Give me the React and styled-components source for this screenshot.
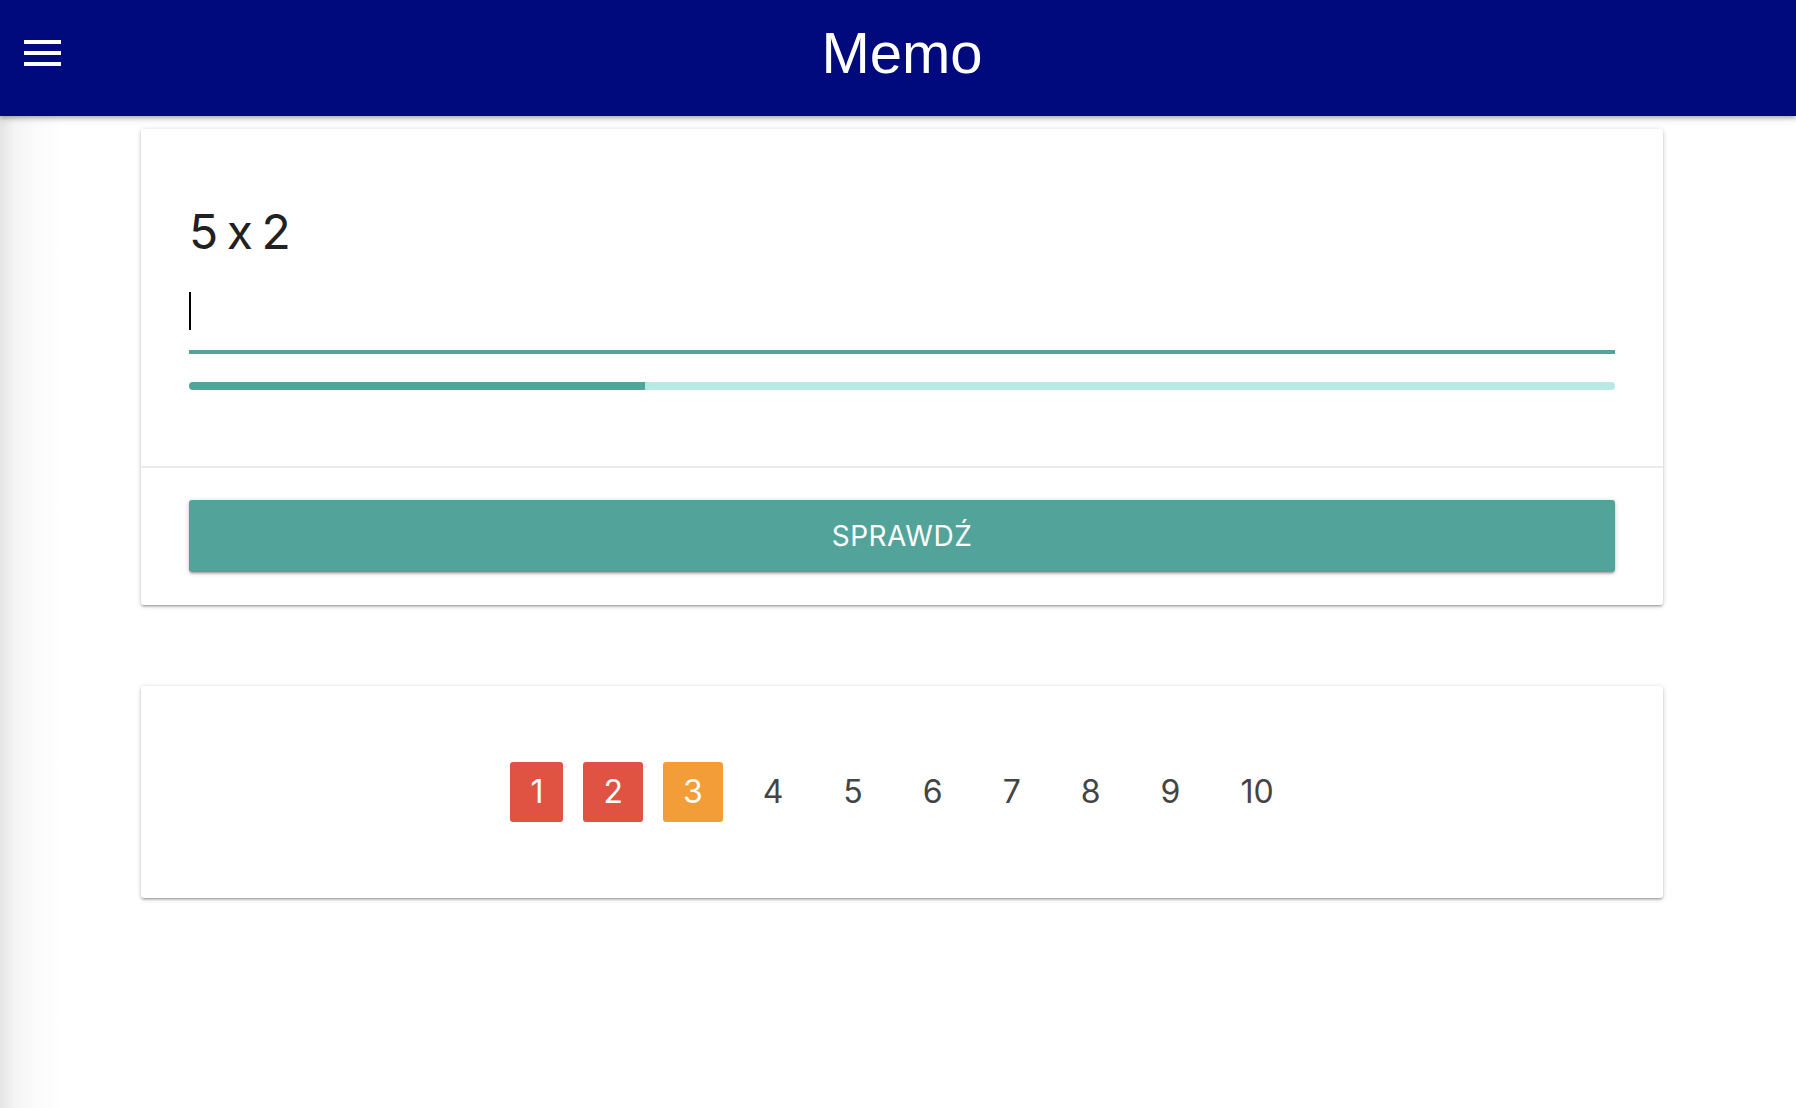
import React from 'react';
import styled, { createGlobalStyle } from 'styled-components';

const GlobalStyle = createGlobalStyle`
  html, body {
    margin: 0;
    padding: 0;
  }
  body {
    min-height: 1108px;
    font-family: Inter, "Noto Sans", sans-serif;
    font-feature-settings: "calt" 0;
    color: #212121;
    background: linear-gradient(to right, #e4e4e4 0, #f4f4f4 14px, #fbfbfb 34px, #ffffff 64px);
  }
`;

const Navbar = styled.header`
  display: grid;
  grid-template-columns: 1fr auto 1fr;
  align-items: center;
  height: 116px;
  padding: 0 0 10px 8px;
  box-sizing: border-box;
  background: #000a7c;
  box-shadow: 0 2px 4px rgba(0, 0, 0, 0.28), 0 4px 8px rgba(0, 0, 0, 0.08);
  position: relative;
  z-index: 2;
`;

const MenuButton = styled.button`
  justify-self: start;
  display: flex;
  flex-direction: column;
  gap: 7px;
  margin-left: 16px;
  padding: 0;
  border: 0;
  background: none;
  cursor: pointer;

  span {
    display: block;
    width: 37px;
    height: 4px;
    background: #fff;
  }
`;

const Title = styled.h1`
  margin: 0;
  font-family: "Liberation Sans", Arial, sans-serif;
  font-weight: 400;
  font-size: 58px;
  line-height: 1;
  color: #fff;
`;

const Main = styled.main`
  padding: 13px 133px 0 141px;
`;

const Card = styled.section`
  background: #fff;
  border-radius: 3px;
  box-shadow: 0 2px 2px 0 rgba(0, 0, 0, 0.14), 0 3px 1px -2px rgba(0, 0, 0, 0.12),
    0 1px 5px 0 rgba(0, 0, 0, 0.2);
  margin-bottom: ${(p) => p.$gap || 0}px;
`;

const CardContent = styled.div`
  padding: 74px 48px 76px;
  border-bottom: 2px solid #ececec;
`;

const Question = styled.h2`
  margin: 0;
  font-size: 48px;
  font-weight: 400;
  line-height: 1.2;
  letter-spacing: -1px;
  word-spacing: -3px;
  color: #212121;
`;

const Field = styled.div`
  margin-top: 22px;
  height: 71px;
  border-bottom: 4px solid #52a49a;
  padding-top: 9px;
  box-sizing: border-box;
`;

const Caret = styled.span`
  display: block;
  width: 2px;
  height: 38px;
  background: #000;
`;

const Progress = styled.div`
  margin-top: 28px;
  height: 8px;
  border-radius: 4px;
  background: #b8e9e5;
  overflow: hidden;
`;

const ProgressFill = styled.div`
  height: 100%;
  background: #52a49a;
`;

const CardAction = styled.div`
  padding: 32px 48px 33px;
`;

const CheckButton = styled.button`
  display: block;
  width: 100%;
  height: 72px;
  border: 0;
  border-radius: 3px;
  background: #52a49a;
  color: #fff;
  font-family: Inter, "Noto Sans", sans-serif;
  font-size: 28px;
  letter-spacing: 0.5px;
  text-transform: uppercase;
  box-shadow: 0 2px 2px 0 rgba(0, 0, 0, 0.14), 0 3px 1px -2px rgba(0, 0, 0, 0.12),
    0 1px 5px 0 rgba(0, 0, 0, 0.2);
  cursor: pointer;
`;

const Pager = styled.ul`
  display: flex;
  justify-content: center;
  gap: 20px;
  margin: 0;
  padding: 76px 48px;
  list-style: none;
`;

const PageItem = styled.li`
  height: 60px;
  padding: 0 20px;
  border-radius: 3px;
  font-size: 32px;
  line-height: 60px;
  color: ${(p) => (p.$state ? '#fff' : '#444')};
  background: ${(p) =>
    p.$state === 'wrong' ? '#e05343' : p.$state === 'half' ? '#f29d38' : 'transparent'};
`;

const pages = [
  { n: 1, state: 'wrong' },
  { n: 2, state: 'wrong' },
  { n: 3, state: 'half' },
  { n: 4 },
  { n: 5 },
  { n: 6 },
  { n: 7 },
  { n: 8 },
  { n: 9 },
  { n: 10 },
];

const App = () => {
  const progress = (645 - 189) / 1426;

  return (
    <>
      <GlobalStyle />
      <Navbar>
        <MenuButton aria-label="menu">
          <span />
          <span />
          <span />
        </MenuButton>
        <Title>Memo</Title>
        <div />
      </Navbar>
      <Main>
        <Card $gap={81}>
          <CardContent>
            <Question>5 x 2</Question>
            <Field>
              <Caret />
            </Field>
            <Progress>
              <ProgressFill style={{ width: `${progress * 100}%` }} />
            </Progress>
          </CardContent>
          <CardAction>
            <CheckButton>Sprawdź</CheckButton>
          </CardAction>
        </Card>
        <Card>
          <Pager>
            {pages.map((p) => (
              <PageItem key={p.n} $state={p.state}>
                {p.n}
              </PageItem>
            ))}
          </Pager>
        </Card>
      </Main>
    </>
  );
};

export default App;
